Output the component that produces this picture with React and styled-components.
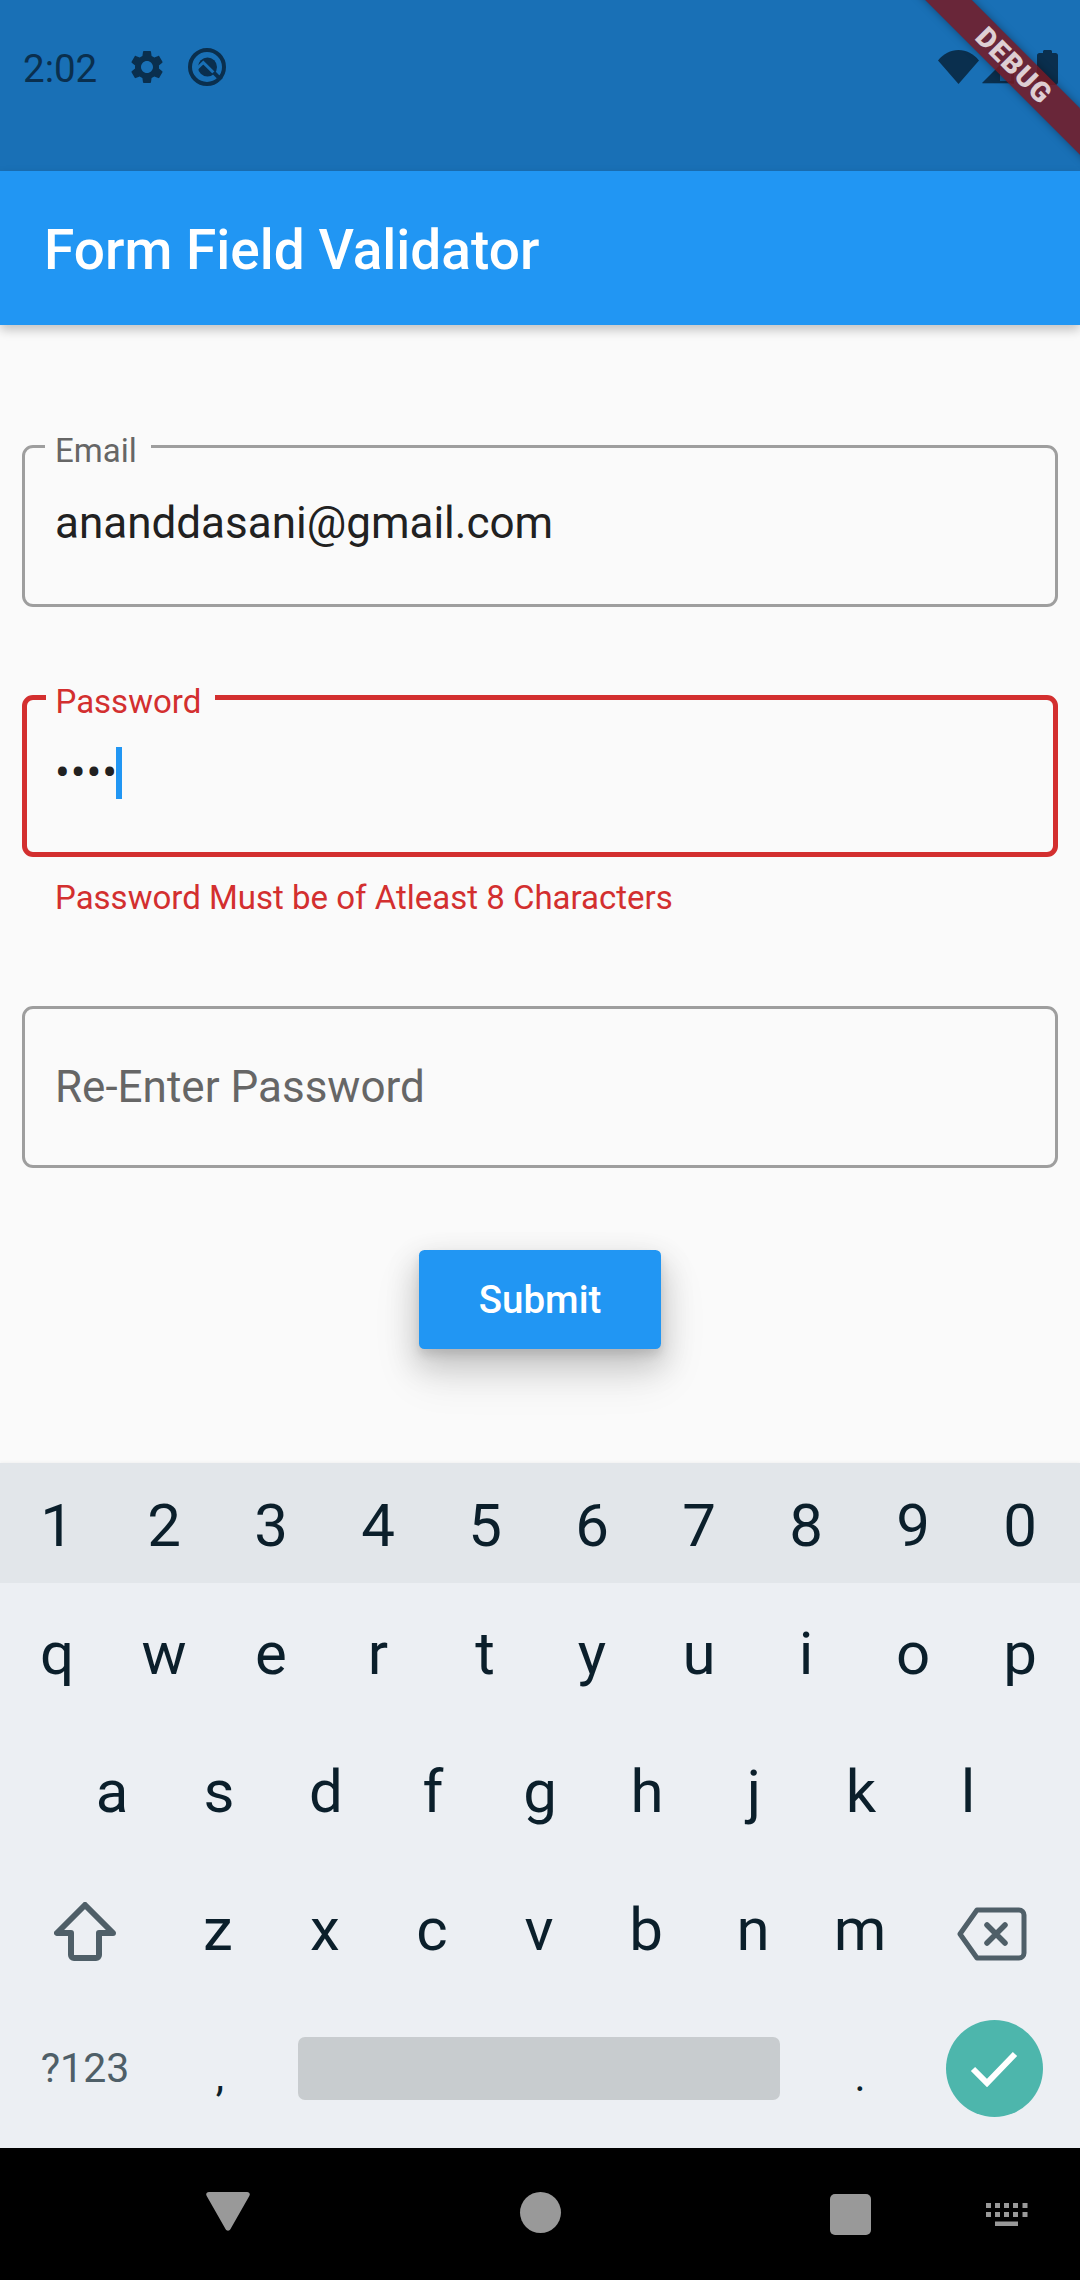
import React from "react";
import styled, { createGlobalStyle } from "styled-components";

const Global = createGlobalStyle`
  html, body {
    margin: 0;
    padding: 0;
    background: #fafafa;
  }
  * {
    box-sizing: border-box;
  }
`;

const numberKeys = ["1", "2", "3", "4", "5", "6", "7", "8", "9", "0"];
const topKeys = ["q", "w", "e", "r", "t", "y", "u", "i", "o", "p"];
const middleKeys = ["a", "s", "d", "f", "g", "h", "j", "k", "l"];
const bottomKeys = ["z", "x", "c", "v", "b", "n", "m"];

export default function App() {
  return (
    <Screen>
      <Global />
      <StatusBar>
        <StatusLeft>
          <Time>2:02</Time>
          <GearIcon viewBox="0 0 24 24">
            <path d="M19.14 12.94c.04-.3.06-.61.06-.94 0-.32-.02-.64-.07-.94l2.03-1.58c.18-.14.23-.41.12-.61l-1.92-3.32c-.12-.22-.37-.29-.59-.22l-2.39.96c-.5-.38-1.03-.7-1.62-.94l-.36-2.54c-.04-.24-.24-.41-.48-.41h-3.84c-.24 0-.43.17-.47.41l-.36 2.54c-.59.24-1.13.57-1.62.94l-2.39-.96c-.22-.08-.47 0-.59.22L2.74 8.87c-.12.21-.08.47.12.61l2.03 1.58c-.05.3-.09.63-.09.94s.02.64.07.94l-2.03 1.58c-.18.14-.23.41-.12.61l1.92 3.32c.12.22.37.29.59.22l2.39-.96c.5.38 1.03.7 1.62.94l.36 2.54c.05.24.24.41.48.41h3.84c.24 0 .44-.17.47-.41l.36-2.54c.59-.24 1.13-.56 1.62-.94l2.39.96c.22.08.47 0 .59-.22l1.92-3.32c.12-.22.07-.47-.12-.61l-2.01-1.58zM12 15.6c-1.98 0-3.6-1.62-3.6-3.6s1.62-3.6 3.6-3.6 3.6 1.62 3.6 3.6-1.62 3.6-3.6 3.6z" />
          </GearIcon>
          <QIcon viewBox="0 0 38 38">
            <circle cx="19" cy="19" r="17" fill="none" stroke="currentColor" strokeWidth="4" />
            <circle cx="19.5" cy="19" r="9.500" fill="currentColor" />
            <path d="M9 20.500 15.300 14.500 33 32" fill="none" stroke="#1970b6" strokeWidth="3" />
            <path d="M27 23l7.500 7.500-3 2.500-7.500-7.500z" fill="currentColor" />
          </QIcon>
        </StatusLeft>
        <StatusRight>
          <WifiIcon viewBox="0 0 41 34">
            <path d="M0 10.500C5.500 3.800 12.600 0 20.500 0S35.500 3.800 41 10.500L20.500 34z" />
          </WifiIcon>
          <SignalIcon viewBox="0 0 34 34">
            <path d="M32 0v34H0z" opacity="0.3" />
            <path d="M29 3h3v31h-3z" opacity="0.6" />
            <path d="M0 33 18 15v16h14v2z" />
          </SignalIcon>
          <BatteryIcon viewBox="0 0 21 35">
            <path d="M6 3V1.500C6 .7 6.700 0 7.500 0h6c.8 0 1.500.7 1.500 1.500V3h3.500C20 3 21 4 21 5.500V32c0 1.600-1.200 3-2.800 3H2.800C1.200 35 0 33.600 0 32V5.500C0 4 1 3 2.500 3z" />
          </BatteryIcon>
        </StatusRight>
      </StatusBar>

      <AppBar>
        <Title>Form Field Validator</Title>
      </AppBar>

      <Form>
        <Field>
          <FieldLabel>Email</FieldLabel>
          <FieldValue>ananddasani@gmail.com</FieldValue>
        </Field>

        <Field $error>
          <FieldLabel $error>Password</FieldLabel>
          <FieldValue>
            <Dots>••••</Dots>
            <Caret />
          </FieldValue>
        </Field>
        <ErrorText>Password Must be of Atleast 8 Characters</ErrorText>

        <Field>
          <Hint>Re-Enter Password</Hint>
        </Field>

        <SubmitRow>
          <SubmitButton type="button">Submit</SubmitButton>
        </SubmitRow>
      </Form>

      <Keyboard>
        <NumberRow>
          {numberKeys.map((k) => (
            <Key key={k}>{k}</Key>
          ))}
        </NumberRow>
        <KeyRow>
          {topKeys.map((k) => (
            <Key key={k}>{k}</Key>
          ))}
        </KeyRow>
        <KeyRow $inset>
          {middleKeys.map((k) => (
            <Key key={k}>{k}</Key>
          ))}
        </KeyRow>
        <KeyRow>
          <ActionKey>
            <ShiftIcon viewBox="0 0 62 59">
              <path d="M31 3 3 31h14v22a3 3 0 0 0 3 3h22a3 3 0 0 0 3-3V31h14z" strokeLinejoin="round" />
            </ShiftIcon>
          </ActionKey>
          {bottomKeys.map((k) => (
            <Key key={k}>{k}</Key>
          ))}
          <ActionKey $back>
            <BackspaceIcon viewBox="0 0 70 54">
              <path d="M20 3h42a5 5 0 0 1 5 5v38a5 5 0 0 1-5 5H20L3 27z" strokeLinejoin="round" />
              <path d="M30 18l18 18M48 18 30 36" strokeLinecap="round" strokeWidth="5.500" />
            </BackspaceIcon>
          </ActionKey>
        </KeyRow>
        <LastRow>
          <SymbolKey>?123</SymbolKey>
          <PunctKey>,</PunctKey>
          <SpaceCell>
            <SpaceBar />
          </SpaceCell>
          <PunctKey>.</PunctKey>
          <EnterCell>
            <EnterButton>
              <svg width="48" height="37" viewBox="0 0 48 37">
                <path d="M3 19l14 14L45 4" fill="none" stroke="#fff" strokeWidth="6" />
              </svg>
            </EnterButton>
          </EnterCell>
        </LastRow>
      </Keyboard>

      <NavBar>
        <BackIcon viewBox="0 0 44 39">
          <path d="M3 0h38c2.500 0 3.500 2 2.300 4L24.500 37c-1.200 2.300-3.800 2.300-5 0L.7 4C-.5 2 .5 0 3 0z" />
        </BackIcon>
        <HomeDot />
        <RecentSquare />
        <KeyboardIcon viewBox="0 0 42 23">
          <path d="M0 0h5v5H0zM9 0h5v5H9zM18 0h5v5h-5zM27 0h5v5h-5zM36.500 0h5v5h-5zM0 9h5v5H0zM9 9h5v5H9zM18 9h5v5h-5zM27 9h5v5h-5zM36.500 9h5v5h-5zM9 18.500h23V23H9z" />
        </KeyboardIcon>
      </NavBar>

      <DebugBanner>DEBUG</DebugBanner>
    </Screen>
  );
}

const Screen = styled.div`
  position: relative;
  width: 1080px;
  height: 2280px;
  overflow: hidden;
  display: flex;
  flex-direction: column;
  background: #fafafa;
  font-family: Roboto, "Liberation Sans", sans-serif;
`;

const StatusBar = styled.div`
  height: 171px;
  flex: none;
  padding: 48px 22px 0 23px;
  display: flex;
  justify-content: space-between;
  align-items: flex-start;
  background: #1970b6;
  color: #0a2f4e;
`;

const StatusLeft = styled.div`
  display: flex;
  align-items: center;
`;

const Time = styled.span`
  font-size: 38.5px;
  line-height: 42px;
  width: 104px;
`;

const GearIcon = styled.svg`
  width: 40px;
  height: 40px;
  margin-right: 21px;
  margin-top: -4px;
  fill: currentColor;
`;

const QIcon = styled.svg`
  width: 38px;
  height: 38px;
  margin-top: -4px;
  color: #0a2f4e;
`;

const StatusRight = styled.div`
  display: flex;
  align-items: flex-start;
  padding-top: 2px;
  color: #0a2f4e;
`;

const WifiIcon = styled.svg`
  width: 41px;
  height: 34px;
  fill: currentColor;
  margin-right: 3px;
`;

const SignalIcon = styled.svg`
  width: 34px;
  height: 34px;
  fill: currentColor;
  margin-right: 21px;
`;

const BatteryIcon = styled.svg`
  width: 21px;
  height: 35px;
  fill: currentColor;
`;

const AppBar = styled.header`
  position: relative;
  z-index: 2;
  height: 154px;
  flex: none;
  padding: 4px 44px 0;
  display: flex;
  align-items: center;
  background: #2196f3;
  box-shadow: 0 5px 10px rgba(0, 0, 0, 0.22);
`;

const Title = styled.h1`
  margin: 0;
  font-size: 55px;
  font-weight: 500;
  color: #fff;
`;

const Form = styled.main`
  flex: 1;
  padding: 120px 22px 0;
  display: flex;
  flex-direction: column;
`;

const Field = styled.div`
  position: relative;
  height: 161.5px;
  flex: none;
  margin-bottom: ${({ $error }) => ($error ? "0" : "88.5px")};
  padding: 0 ${({ $error }) => ($error ? "28px" : "30px")};
  display: flex;
  align-items: center;
  border-radius: 11px;
  border: ${({ $error }) => ($error ? "5px solid #d32f2f" : "3px solid #9e9e9e")};
`;

const FieldLabel = styled.label`
  position: absolute;
  top: ${({ $error }) => ($error ? "-18px" : "-17px")};
  left: ${({ $error }) => ($error ? "18.5px" : "20px")};
  padding: 0 14px 0 10px;
  background: #fafafa;
  font-size: 33px;
  line-height: 39px;
  color: ${({ $error }) => ($error ? "#d32f2f" : "#666")};
`;

const FieldValue = styled.div`
  display: flex;
  align-items: center;
  font-size: 44px;
  line-height: 52px;
  color: #212121;
  margin-top: -5px;
`;

const Dots = styled.span`
  font-size: 44px;
  letter-spacing: 0.9px;
`;

const Caret = styled.span`
  width: 6px;
  height: 52px;
  margin-left: -2px;
  background: #2196f3;
`;

const Hint = styled.span`
  font-size: 44px;
  color: #666;
`;

const ErrorText = styled.div`
  height: 149.5px;
  flex: none;
  padding: 21px 0 0 33px;
  font-size: 33px;
  line-height: 39px;
  color: #d32f2f;
`;

const SubmitRow = styled.div`
  display: flex;
  justify-content: center;
  margin-top: -6px;
`;

const SubmitButton = styled.button`
  width: 242px;
  height: 99px;
  border: 0;
  border-radius: 5.5px;
  background: #2196f3;
  color: #fff;
  font-family: inherit;
  font-size: 38.5px;
  font-weight: 500;
  box-shadow: 0 14px 30px 4px rgba(0, 0, 0, 0.15), 0 24px 46px 4px rgba(0, 0, 0, 0.09),
    0 6px 10px rgba(0, 0, 0, 0.1);
`;

const Keyboard = styled.section`
  height: 685px;
  flex: none;
  display: flex;
  flex-direction: column;
  background: #eceff3;
  box-shadow: 0 -1px 3px rgba(0, 0, 0, 0.04);
`;

const NumberRow = styled.div`
  height: 120px;
  flex: none;
  display: flex;
  padding: 4px 3.5px 0;
  background: #e2e6ea;
`;

const KeyRow = styled.div`
  height: 138px;
  flex: none;
  display: flex;
  padding: 2px 3.5px 0 ${({ $inset }) => ($inset ? "58.5px" : "3.5px")};
`;

const Key = styled.span`
  width: 107px;
  display: flex;
  align-items: center;
  justify-content: center;
  font-size: 60px;
  color: #0b1f2b;
`;

const ActionKey = styled.span`
  width: 161px;
  display: flex;
  align-items: center;
  justify-content: center;
  padding: 5px ${({ $back }) => ($back ? "4px" : "0")} 0 ${({ $back }) => ($back ? "0" : "2px")};
`;

const ShiftIcon = styled.svg`
  width: 62px;
  height: 59px;
  fill: none;
  stroke: #4f5f68;
  stroke-width: 6px;
`;

const BackspaceIcon = styled.svg`
  width: 70px;
  height: 54px;
  margin-top: 4px;
  fill: none;
  stroke: #4f5f68;
  stroke-width: 5px;
`;

const LastRow = styled.div`
  flex: 1;
  display: flex;
  align-items: center;
  padding: 0 3.5px 9px;
`;

const SymbolKey = styled.span`
  width: 163px;
  text-align: center;
  font-size: 41px;
  color: #4f5f68;
`;

const PunctKey = styled.span`
  width: 107px;
  text-align: center;
  font-size: 42px;
  color: #0b1f2b;
  padding-top: 16px;
`;

const SpaceCell = styled.div`
  width: 533px;
  padding: 0 27px 0 24px;
`;

const SpaceBar = styled.div`
  height: 63px;
  border-radius: 7px;
  background: #c8cccf;
`;

const EnterCell = styled.div`
  flex: 1;
  display: flex;
  justify-content: center;
  padding-right: 2px;
`;

const EnterButton = styled.div`
  width: 97px;
  height: 97px;
  border-radius: 50%;
  background: #4db6ac;
  display: flex;
  align-items: center;
  justify-content: center;
`;

const NavBar = styled.nav`
  position: relative;
  height: 132px;
  flex: none;
  background: #000;
`;

const BackIcon = styled.svg`
  position: absolute;
  left: 206px;
  top: 44px;
  width: 44px;
  height: 39px;
  fill: #999;
`;

const HomeDot = styled.div`
  position: absolute;
  left: 520px;
  top: 44px;
  width: 41px;
  height: 41px;
  border-radius: 50%;
  background: #999;
`;

const RecentSquare = styled.div`
  position: absolute;
  left: 830px;
  top: 46px;
  width: 41px;
  height: 41px;
  border-radius: 5px;
  background: #999;
`;

const KeyboardIcon = styled.svg`
  position: absolute;
  left: 986px;
  top: 55px;
  width: 42px;
  height: 23px;
  fill: #999;
`;

const DebugBanner = styled.div`
  position: absolute;
  left: 864px;
  top: 49px;
  width: 300px;
  height: 33px;
  transform: rotate(45deg);
  display: flex;
  align-items: center;
  justify-content: center;
  background: rgba(120, 25, 35, 0.85);
  box-shadow: 0 0 9px rgba(0, 0, 0, 0.35);
  color: rgba(255, 255, 255, 0.78);
  font-family: Roboto, sans-serif;
  font-size: 28px;
  font-weight: 900;
  letter-spacing: 1px;
`;
